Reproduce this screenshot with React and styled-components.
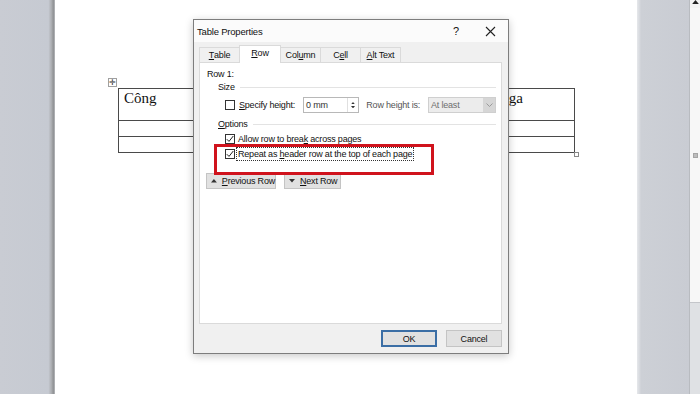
import styled, { createGlobalStyle } from "styled-components";

const GlobalStyle = createGlobalStyle`
  html, body {
    margin: 0;
    padding: 0;
    overflow: hidden;
  }
  * {
    box-sizing: border-box;
  }
`;

const Check = () => (
  <svg width="8" height="8" viewBox="0 0 8 8">
    <path d="M0.8 4.2 L3 6.4 L7.3 1" fill="none" stroke="#222" strokeWidth="1" />
  </svg>
);

const Tri = ({ up, size = 5, color = "#333" }) => (
  <svg width={size} height={size * 0.6} viewBox="0 0 10 6">
    <path d={up ? "M0 6 L5 0 L10 6 Z" : "M0 0 L5 6 L10 0 Z"} fill={color} />
  </svg>
);

const App = () => {
  return (
    <>
      <GlobalStyle />
      <Screen>
        <LeftGutter />
        <Page>
          <TableWrap>
            <MoveHandle>✛</MoveHandle>
            <DocTable>
              <tbody>
                <tr className="head">
                  <td style={{ width: 182 }}>Công</td>
                  <td style={{ width: 192 }}>Ngày</td>
                  <td>Nga</td>
                </tr>
                <tr className="thin">
                  <td />
                  <td />
                  <td />
                </tr>
                <tr className="thin">
                  <td />
                  <td />
                  <td />
                </tr>
              </tbody>
            </DocTable>
            <ResizeHandle />
          </TableWrap>
        </Page>
        <RightGutter />
        <Scrollbar>
          <ScrollArrow>
            <Tri up size={7} color="#222" />
          </ScrollArrow>
          <ScrollTrack>
            <ScrollMark />
          </ScrollTrack>
          <ScrollFoot />
        </Scrollbar>

        <Dialog>
          <TitleBar>
            <span>Table Properties</span>
            <TitleActions>
              <span className="help">?</span>
              <svg width="11" height="11" viewBox="0 0 11 11">
                <path d="M1 1 L10 10 M10 1 L1 10" stroke="#222" strokeWidth="1.1" />
              </svg>
            </TitleActions>
          </TitleBar>

          <Body>
            <Tabs>
              <Tab><u>T</u>able</Tab>
              <Tab $active><u>R</u>ow</Tab>
              <Tab>Col<u>u</u>mn</Tab>
              <Tab>C<u>e</u>ll</Tab>
              <Tab><u>A</u>lt Text</Tab>
            </Tabs>

            <Panel>
              <Label>Row 1:</Label>
              <Section>
                <SectionHead>
                  <span>Size</span>
                  <Rule />
                </SectionHead>
                <SizeRow>
                  <Box />
                  <Label style={{ marginLeft: 2 }}><u>S</u>pecify height:</Label>
                  <Spin>
                    <SpinValue>0 mm</SpinValue>
                    <SpinButtons>
                      <Tri up size={4} />
                      <Tri size={4} />
                    </SpinButtons>
                  </Spin>
                  <Label $muted>Row height is:</Label>
                  <Select>
                    <span>At least</span>
                    <SelectArrow>
                      <svg width="7" height="4" viewBox="0 0 7 4">
                        <path d="M0.5 0.5 L3.5 3.5 L6.5 0.5" fill="none" stroke="#9a9a9a" />
                      </svg>
                    </SelectArrow>
                  </Select>
                </SizeRow>

                <SectionHead style={{ marginTop: 5 }}>
                  <span><u>O</u>ptions</span>
                  <Rule />
                </SectionHead>
                <OptionRow style={{ marginTop: 3 }}>
                  <Box><Check /></Box>
                  <Label>Allow row to brea<u>k</u> across pages</Label>
                </OptionRow>
                <OptionRow style={{ marginTop: 3 }}>
                  <Box><Check /></Box>
                  <Label $focused>Repeat as <u>h</u>eader row at the top of each page</Label>
                </OptionRow>
              </Section>

              <NavRow>
                <NavButton style={{ width: 70 }}>
                  <Tri up size={6} />
                  <span><u>P</u>revious Row</span>
                </NavButton>
                <NavButton style={{ width: 57 }}>
                  <Tri size={6} />
                  <span><u>N</u>ext Row</span>
                </NavButton>
              </NavRow>

              <Highlight />
            </Panel>

            <Footer>
              <DialogButton $default>OK</DialogButton>
              <DialogButton>Cancel</DialogButton>
            </Footer>
          </Body>
        </Dialog>
      </Screen>
    </>
  );
};

export default App;

const Screen = styled.div`
  position: relative;
  width: 700px;
  height: 394px;
  display: flex;
  background: #c9ccd3;
  overflow: hidden;
`;

const LeftGutter = styled.div`
  width: 55px;
  flex: 0 0 55px;
  background: linear-gradient(90deg, #c9ccd3 0%, #c6cad2 88%, #a9abae 94%, #8f9194 97%, #b9bbbe 100%);
`;

const Page = styled.div`
  flex: 0 0 582px;
  background: #ffffff;
  padding: 88px 0 0 63px;
`;

const RightGutter = styled.div`
  flex: 0 0 52px;
  background: linear-gradient(90deg, #e6e8eb 0%, #cdd0d6 8%, #c9ccd3 100%);
`;

const Scrollbar = styled.div`
  flex: 1;
  display: flex;
  flex-direction: column;
  border-left: 1px solid #b8bbc0;
`;

const ScrollArrow = styled.div`
  height: 8px;
  background: #f3f3f3;
  display: flex;
  justify-content: center;
  align-items: flex-start;
  overflow: hidden;
`;

const ScrollTrack = styled.div`
  height: 295px;
  background: #f7f7f7;
  border-bottom: 1px solid #c4c6ca;
  display: flex;
  justify-content: center;
  padding-top: 145px;
`;

const ScrollMark = styled.div`
  width: 5px;
  height: 5px;
  background: #bdbdbd;
  border: 1px solid #a5a5a5;
`;

const ScrollFoot = styled.div`
  flex: 1;
  background: #dfe1e4;
`;

const TableWrap = styled.div`
  position: relative;
  width: 457px;
`;

const MoveHandle = styled.div`
  position: absolute;
  left: -10px;
  top: -10px;
  width: 9px;
  height: 9px;
  border: 1px solid #a0a0a0;
  background: #fff;
  font-size: 8px;
  line-height: 7px;
  text-align: center;
  color: #333;
`;

const ResizeHandle = styled.div`
  position: absolute;
  right: -4px;
  bottom: -4px;
  width: 5px;
  height: 5px;
  border: 1px solid #888;
  background: #fff;
`;

const DocTable = styled.table`
  width: 457px;
  border-collapse: collapse;
  font-family: "Liberation Serif", "Times New Roman", serif;
  font-size: 15px;
  color: #111;

  td {
    border: 1px solid #4a4a4a;
    padding: 0 5px;
    vertical-align: top;
  }

  tr.head td {
    height: 32px;
    padding-top: 1px;
  }

  tr.thin td {
    height: 16px;
  }
`;

const Dialog = styled.div`
  position: absolute;
  left: 193px;
  top: 19px;
  width: 316px;
  height: 335px;
  display: flex;
  flex-direction: column;
  background: #f0f0f0;
  border: 1px solid #7d7d7d;
  box-shadow: 0 2px 8px rgba(0, 0, 0, 0.22);
  font-family: "Liberation Sans", Arial, sans-serif;
  font-size: 9px;
  letter-spacing: -0.2px;
  color: #111;
  white-space: nowrap;
`;

const TitleBar = styled.div`
  height: 22px;
  display: flex;
  align-items: center;
  justify-content: space-between;
  padding: 0 0 0 3px;
  background: #fbfbfb;
  font-size: 9.5px;
`;

const TitleActions = styled.div`
  display: flex;
  align-items: center;
  gap: 26px;
  padding-right: 12px;

  .help {
    font-size: 11px;
  }
`;

const Body = styled.div`
  flex: 1;
  display: flex;
  flex-direction: column;
  padding: 0 6px 0 5px;
`;

const Tabs = styled.div`
  display: flex;
  align-items: flex-end;
  height: 20px;
  padding-left: 1px;
`;

const Tab = styled.div`
  width: ${(p) => (p.$active ? "42px" : "41px")};
  height: ${(p) => (p.$active ? "18px" : "15px")};
  display: flex;
  align-items: center;
  justify-content: center;
  background: ${(p) => (p.$active ? "#ffffff" : "#f0f0f0")};
  border: 1px solid #dadada;
  border-bottom: none;
  margin-left: -1px;
  margin-bottom: ${(p) => (p.$active ? "-1px" : "0")};
  position: relative;
  z-index: ${(p) => (p.$active ? 2 : 1)};
  padding-bottom: ${(p) => (p.$active ? "3px" : "0")};
`;

const Panel = styled.div`
  position: relative;
  height: 262px;
  background: #ffffff;
  border: 1px solid #dadada;
  padding: 4px 5px 0 5px;
  display: flex;
  flex-direction: column;
`;

const Label = styled.span`
  display: inline-block;
  line-height: 12px;
  color: ${(p) => (p.$muted ? "#555" : "#111")};
  border: 1px dotted ${(p) => (p.$focused ? "#333" : "transparent")};
  padding: 0 1px;
`;

const Section = styled.div`
  display: flex;
  flex-direction: column;
  padding-left: 13px;
`;

const SectionHead = styled.div`
  display: flex;
  align-items: center;
  gap: 5px;
  height: 12px;
`;

const Rule = styled.div`
  flex: 1;
  height: 1px;
  background: #e3e3e3;
`;

const SizeRow = styled.div`
  display: flex;
  align-items: center;
  height: 16px;
  margin-top: 4px;
  padding-left: 7px;
`;

const Box = styled.span`
  width: 10px;
  height: 10px;
  flex: 0 0 10px;
  border: 1px solid #333;
  background: #fff;
  display: flex;
  align-items: center;
  justify-content: center;
`;

const Spin = styled.div`
  width: 58px;
  height: 16px;
  margin: 0 5px 0 6px;
  display: flex;
  align-items: center;
  justify-content: space-between;
  border: 1px solid #b8b8b8;
  background: #fff;
  color: #333;
`;

const SpinValue = styled.span`
  padding-left: 2px;
  line-height: 12px;
`;

const SpinButtons = styled.div`
  width: 11px;
  height: 14px;
  display: flex;
  flex-direction: column;
  align-items: center;
  justify-content: center;
  gap: 2px;
  border-left: 1px solid #e0e0e0;
`;

const Select = styled.div`
  width: 70px;
  height: 16px;
  margin-left: 6px;
  display: flex;
  align-items: center;
  justify-content: space-between;
  border: 1px solid #cfcfcf;
  background: #ececec;
  padding-left: 2px;
  color: #6e6e6e;
`;

const SelectArrow = styled.div`
  width: 12px;
  height: 14px;
  background: #d6d6d6;
  display: flex;
  align-items: center;
  justify-content: center;
`;

const OptionRow = styled.div`
  display: flex;
  align-items: center;
  gap: 1px;
  height: 12px;
  padding-left: 7px;
`;

const NavRow = styled.div`
  display: flex;
  gap: 8px;
  margin-top: 13px;
  padding-left: 1px;
`;

const NavButton = styled.div`
  height: 16px;
  display: flex;
  align-items: center;
  gap: 5px;
  padding-left: 4px;
  background: #e1e1e1;
  border: 1px solid #c4c4c4;
  white-space: nowrap;
`;

const Highlight = styled.div`
  position: absolute;
  left: 14px;
  top: 81px;
  width: 220px;
  height: 31px;
  border: 3.5px solid #d0131d;
`;

const Footer = styled.div`
  flex: 1;
  display: flex;
  justify-content: flex-end;
  align-items: flex-start;
  gap: 9px;
  padding-top: 6px;
`;

const DialogButton = styled.div`
  width: 56px;
  height: 17px;
  display: flex;
  align-items: center;
  justify-content: center;
  background: #e1e1e1;
  border: ${(p) => (p.$default ? "2px solid #3b6ea5" : "1px solid #c4c4c4")};
`;
